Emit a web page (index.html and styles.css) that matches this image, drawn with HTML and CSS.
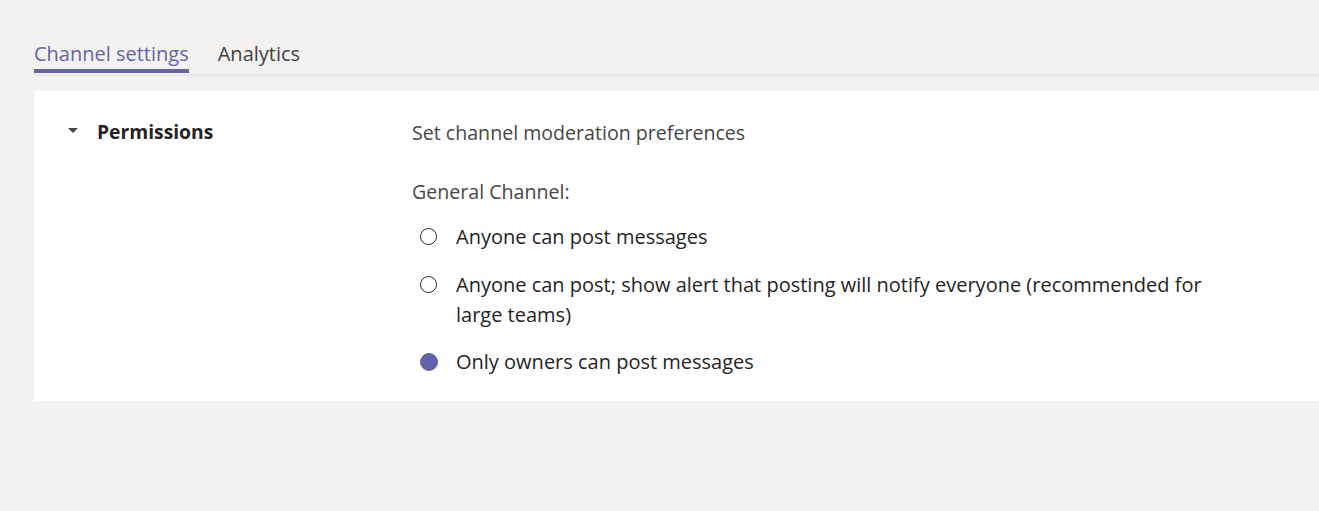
FILE: index.html
```html
<!DOCTYPE html>
<html>
<head>
<meta charset="utf-8">
<link rel="stylesheet" href="styles.css">
</head>
<body>
<div class="page">
  <nav class="tabs">
    <div class="tab active">Channel settings</div>
    <div class="tab">Analytics</div>
  </nav>
  <section class="card">
    <div class="left">
      <svg class="caret" width="10" height="6" viewBox="0 0 10 6"><path d="M0 0 L10 0 L5 5 Z" fill="#484644"/></svg>
      <span class="title">Permissions</span>
    </div>
    <div class="right">
      <div class="desc">Set channel moderation preferences</div>
      <div class="label">General Channel:</div>
      <div class="options">
        <div class="option"><span class="radio"></span><span class="otext">Anyone can post messages</span></div>
        <div class="option"><span class="radio"></span><span class="otext">Anyone can post; show alert that posting will notify everyone (recommended for large teams)</span></div>
        <div class="option"><span class="radio checked"></span><span class="otext">Only owners can post messages</span></div>
      </div>
    </div>
  </section>
</div>
</body>
</html>
```
FILE: styles.css
```css
html, body { margin: 0; padding: 0; background: #f3f2f1; }
body { font-family: "Open Sans", "Noto Sans", sans-serif; color: #252423; }
.page { padding-top: 37px; padding-left: 34px; }
.tabs { display: flex; gap: 29px; height: 37px; box-shadow: 0 2px 2px -1px rgba(0,0,0,0.06); border-bottom: 1px solid #ebeae9; }
.tab { font-size: 20px; line-height: 30px; padding-top: 2px; color: #424140; height: 37px; box-sizing: border-box; }
.tab.active { color: #6264a7; border-bottom: 4px solid #6264a7; height: 36px; }
.card { background: #fff; margin-top: 16px; display: flex; height: 310px; box-sizing: border-box; padding-top: 28px; }
.left { width: 378px; display: flex; align-items: center; height: 24px; padding-left: 34px; box-sizing: border-box; }
.caret { margin-right: 19px; }
.title { font-size: 19.3px; font-weight: 700; color: #252423; }
.right { flex: 1; }
.desc { font-size: 19.6px; line-height: 26px; color: #484644; margin-top: 1px; }
.label { font-size: 19.6px; line-height: 26px; color: #484644; margin-top: 33px; }
.options { display: flex; flex-direction: column; gap: 17px; margin-top: 17px; }
.option { display: flex; align-items: flex-start; }
.option:first-child { margin-bottom: 1px; }
.radio { width: 17px; height: 17px; box-sizing: border-box; border: 1.5px solid #252423; border-radius: 50%; margin-left: 8px; margin-right: 19px; flex: none; margin-top: 6px; }
.radio.checked { width: 18px; height: 18px; margin-top: 5.5px; margin-right: 18px; background: #6264a7; border-color: #6264a7; }
.otext { font-size: 20px; line-height: 30px; color: #252423; max-width: 775px; }
```
